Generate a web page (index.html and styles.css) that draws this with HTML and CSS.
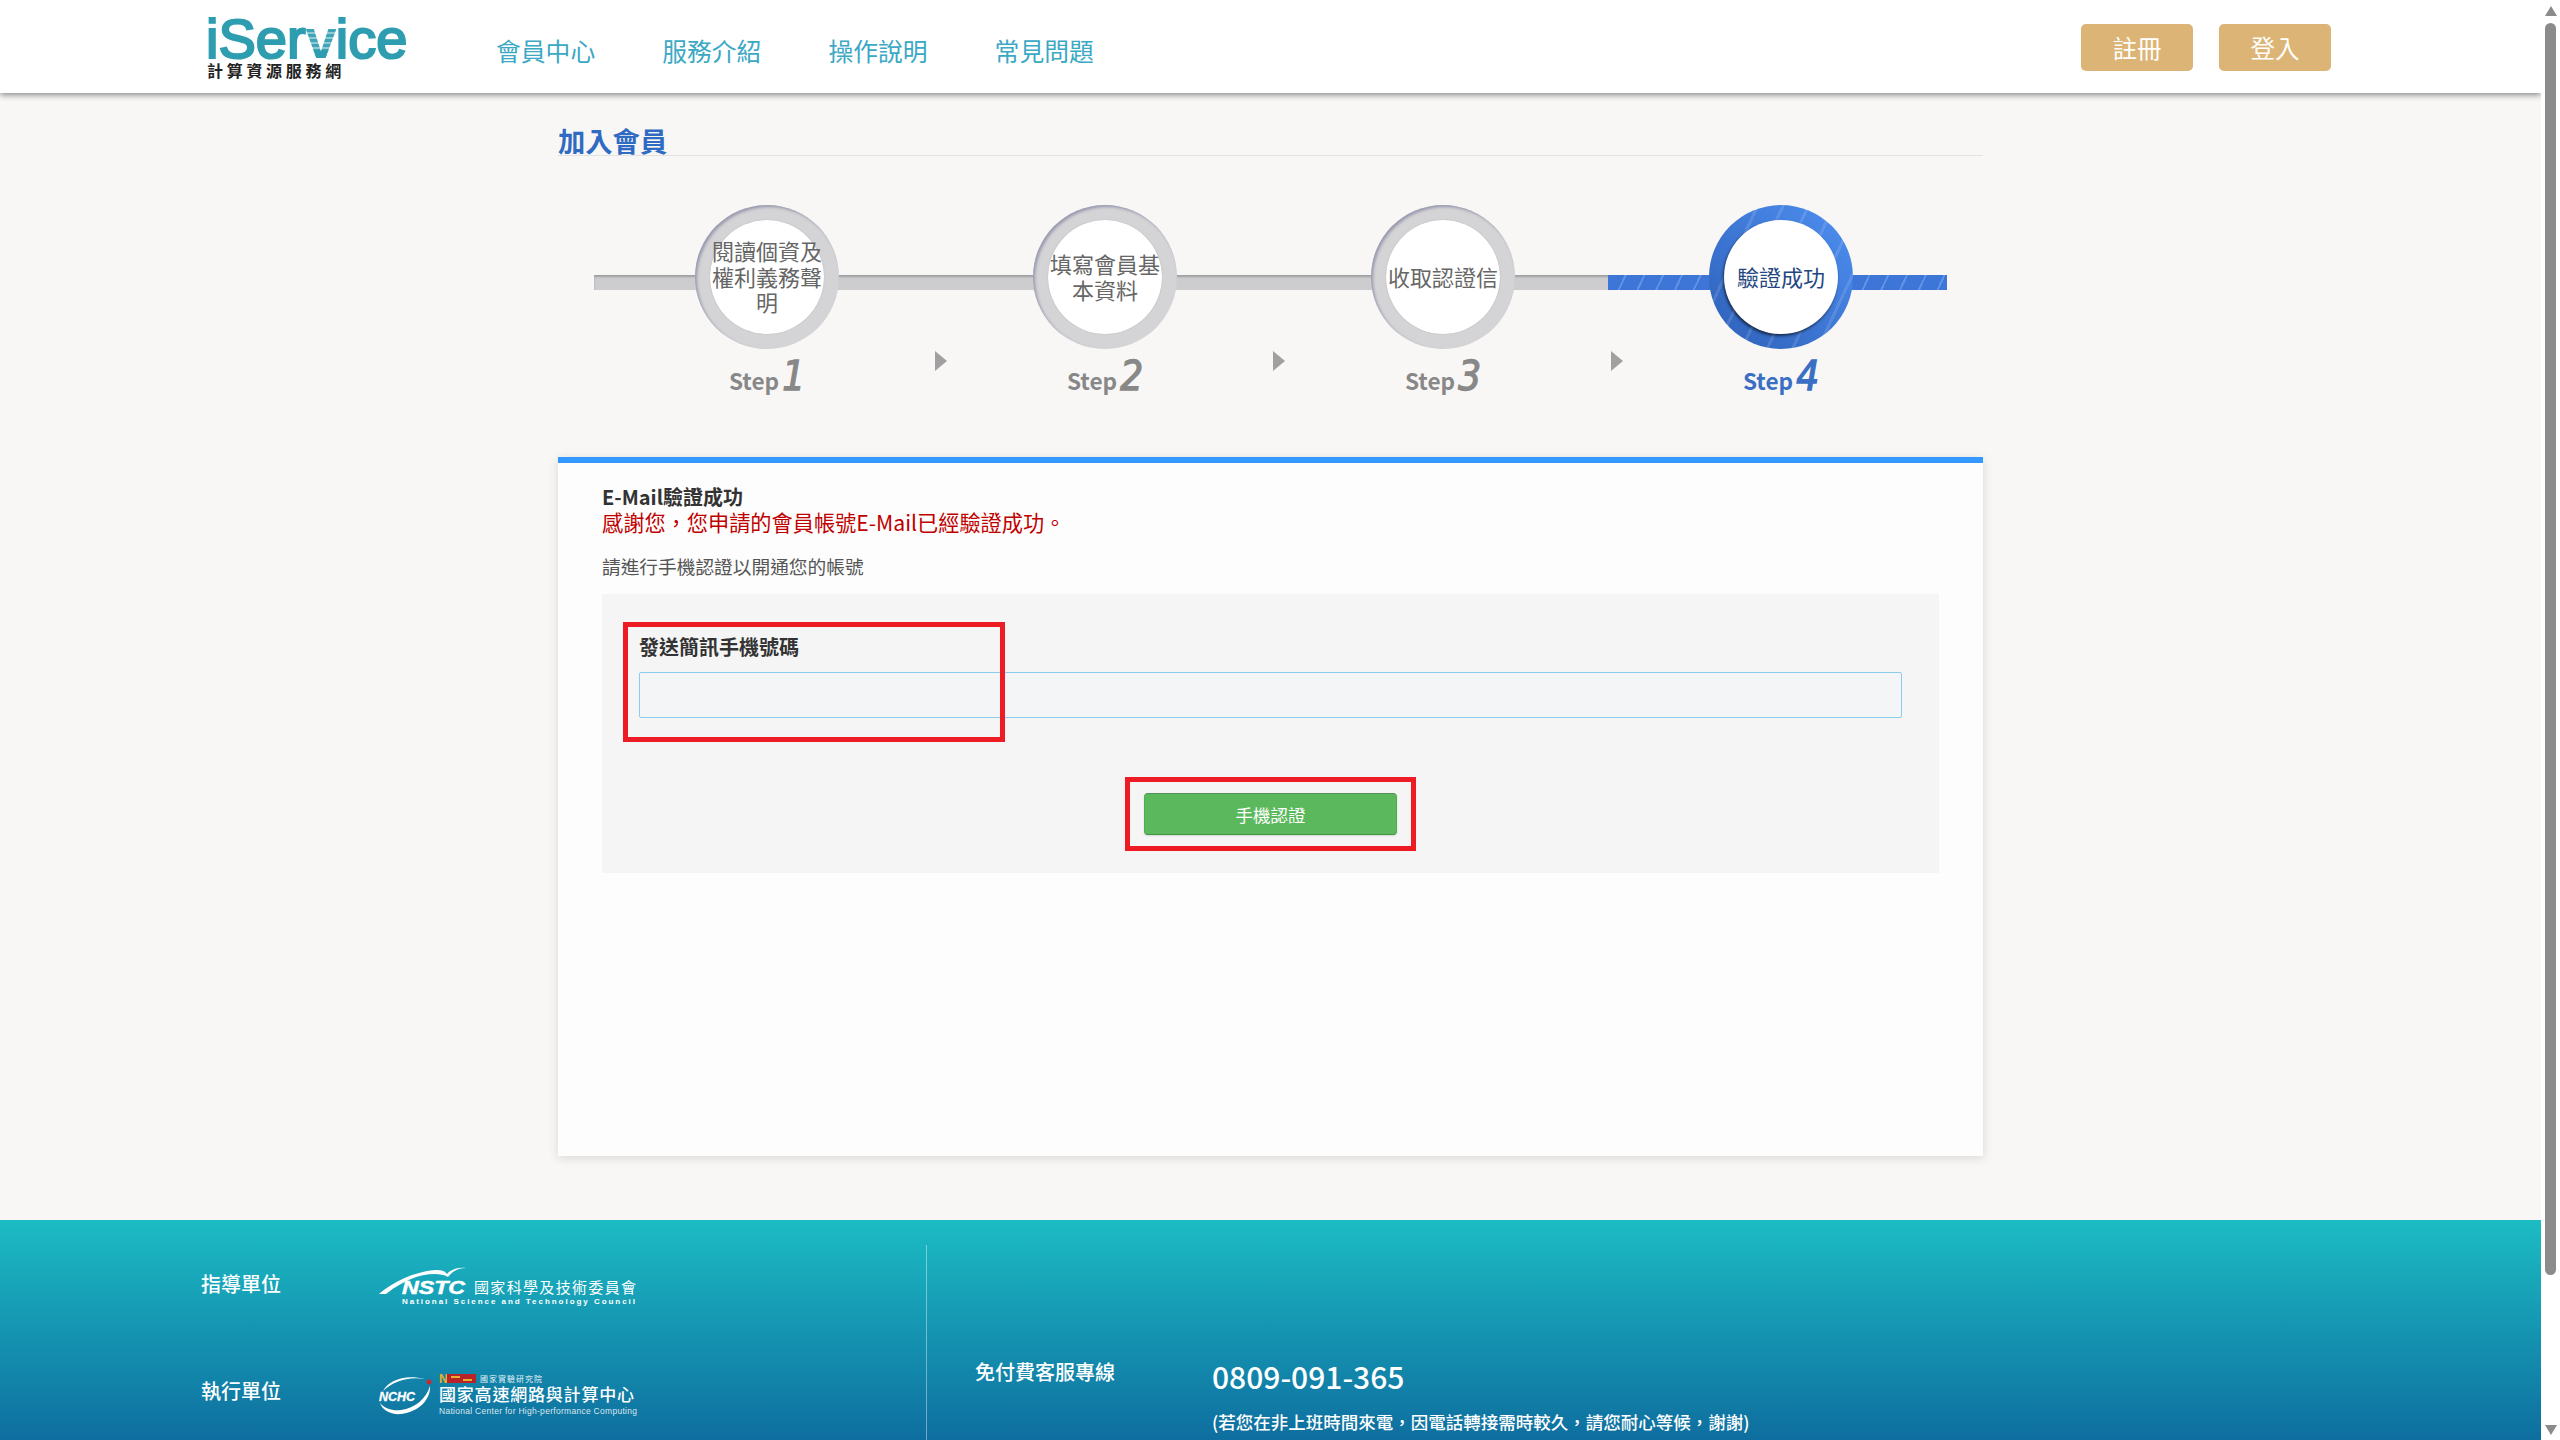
FILE: index.html
```html
<!DOCTYPE html>
<html lang="zh-Hant">
<head>
<meta charset="utf-8">
<title>加入會員 - iService</title>
<link rel="stylesheet" href="styles.css">
</head>
<body>
<div class="page">
  <header class="site-header">
    <div class="logo">
      <div class="logo-main">iSer<span class="logo-v">v</span>ice</div>
      <div class="logo-sub">計算資源服務網</div>
    </div>
    <nav class="main-nav">
      <a href="#">會員中心</a>
      <a href="#">服務介紹</a>
      <a href="#">操作說明</a>
      <a href="#">常見問題</a>
    </nav>
    <div class="auth-buttons">
      <a class="auth-btn" href="#">註冊</a>
      <a class="auth-btn" href="#">登入</a>
    </div>
  </header>

  <main class="container">
    <h1 class="page-title">加入會員</h1>

    <ol class="steps">
      <li class="step">
        <div class="ring"><div class="disc">閱讀個資及權利義務聲明</div></div>
        <div class="step-label">Step<b class="step-num">1</b></div>
      </li>
      <li class="step">
        <span class="arrow"></span>
        <div class="ring"><div class="disc">填寫會員基本資料</div></div>
        <div class="step-label">Step<b class="step-num">2</b></div>
      </li>
      <li class="step">
        <span class="arrow"></span>
        <div class="ring"><div class="disc">收取認證信</div></div>
        <div class="step-label">Step<b class="step-num">3</b></div>
      </li>
      <li class="step is-active">
        <span class="arrow"></span>
        <div class="ring"><div class="disc">驗證成功</div></div>
        <div class="step-label">Step<b class="step-num">4</b></div>
      </li>
    </ol>

    <section class="card">
      <p class="msg-title">E-Mail驗證成功</p>
      <p class="msg-red">感謝您，您申請的會員帳號E-Mail已經驗證成功。</p>
      <p class="msg-note">請進行手機認證以開通您的帳號</p>
      <form class="panel">
        <label class="field-label" for="phone">發送簡訊手機號碼</label>
        <input class="field-input" id="phone" type="text">
        <div class="actions"><button class="verify-btn" type="button">手機認證</button></div>
        <span class="mark mark-field"></span>
        <span class="mark mark-btn"></span>
      </form>
    </section>
  </main>

  <footer class="site-footer">
    <div class="units">
      <div class="unit">
        <span class="unit-label">指導單位</span>
        <svg class="org-logo" viewBox="0 0 257 39" width="257" height="39" aria-label="NSTC">
          <path class="org-fill" d="M0 28C14 16 34 6 56 4C62 3.5 66 5 68 8C72 3 80 1 87 2C79 2 74 5 69 11C60 6 45 8 32 13C20 18 12 24 7 28Z"/>
          <text class="nstc-mark" x="23" y="28" textLength="63" lengthAdjust="spacingAndGlyphs">NSTC</text>
          <text class="nstc-cjk" x="95" y="27" textLength="162">國家科學及技術委員會</text>
          <text class="nstc-en" x="23" y="38" textLength="233">National Science and Technology Council</text>
        </svg>
      </div>
      <div class="unit unit-b">
        <span class="unit-label">執行單位</span>
        <svg class="org-logo" viewBox="0 0 258 42" width="258" height="42" aria-label="NCHC">
          <path class="org-fill" d="M4 18C10 7 26 1 46 6C30 3 14 8 4 18Z"/>
          <path class="org-fill" d="M51 13C52 26 40 39 22 41C12 42 3 37 1 30C6 36 14 38 22 37C36 35 47 26 51 13Z"/>
          <circle class="org-dot" cx="50" cy="9" r="2.4"/>
          <text class="nchc-mark" x="0" y="28" textLength="36" lengthAdjust="spacingAndGlyphs">NCHC</text>
          <text class="nchc-n" x="60" y="10">N</text>
          <rect class="org-red" x="68" y="1" width="29" height="9"/>
          <rect class="org-goldbar" x="72" y="3" width="9" height="2"/>
          <rect class="org-goldbar" x="84" y="6" width="9" height="2"/>
          <text class="nchc-top" x="101" y="8.5" textLength="62">國家實驗研究院</text>
          <text class="nchc-cjk" x="60" y="28" textLength="195">國家高速網路與計算中心</text>
          <text class="nchc-en" x="60" y="41" textLength="198">National Center for High-performance Computing</text>
        </svg>
      </div>
    </div>
    <div class="hotline">
      <div class="hotline-label">免付費客服專線</div>
      <div class="hotline-info">
        <div class="hotline-number">0809-091-365</div>
        <div class="hotline-note">(若您在非上班時間來電，因電話轉接需時較久，請您耐心等候，謝謝)</div>
      </div>
    </div>
  </footer>
</div>

<div class="scrollbar">
  <span class="sb-up"></span>
  <span class="sb-thumb"></span>
  <span class="sb-down"></span>
</div>
</body>
</html>
```

FILE: styles.css
```css
* { box-sizing: border-box; }
html, body { margin: 0; padding: 0; height: 1440px; overflow: hidden; }
body {
  display: flex;
  font-family: "Noto Sans CJK TC", "Noto Sans", sans-serif;
  background: #f8f7f6;
  color: #333;
}
.page { flex: 1; min-width: 0; height: 1440px; overflow: hidden; display: flex; flex-direction: column; }

/* scrollbar */
.scrollbar {
  width: 19px; flex: none; height: 1440px; background: #fff;
  display: flex; flex-direction: column; align-items: center; padding: 6px 0 5px;
}
.sb-up { width: 0; height: 0; border: 6.5px solid transparent; border-top: 0; border-bottom: 10px solid #8b8b8b; }
.sb-thumb { width: 11px; height: 1252px; margin-top: 7px; background: #8b8b8b; border-radius: 6px; }
.sb-down { width: 0; height: 0; margin-top: auto; border: 6.5px solid transparent; border-bottom: 0; border-top: 10px solid #8b8b8b; }

/* header */
.site-header {
  height: 93px; flex: none; background: #fff; display: flex; align-items: center;
  padding: 0 210px 0 206px; box-shadow: 0 2px 6px rgba(0, 0, 0, .45); position: relative;
}
.logo { flex: none; width: 202px; height: 66px; display: flex; flex-direction: column; }
.logo-main {
  font-family: "Liberation Sans", sans-serif; font-size: 56px; line-height: 48px; height: 47px;
  color: #2e9db0; -webkit-text-stroke: 2.2px #2e9db0; white-space: nowrap; padding-top: 1px;
}
.logo-v {
  font-weight: 700; letter-spacing: -1px;
  color: transparent; -webkit-text-stroke: 0;
  background: linear-gradient(180deg, transparent 68%, #2e9db0 68%), repeating-linear-gradient(180deg, #8fcbd6 0 2px, #3fa5b6 2px 5px);
  -webkit-background-clip: text; background-clip: text;
}
.logo-sub {
  font-weight: 700; font-size: 16px; line-height: 18px; letter-spacing: 3.7px;
  color: #222; white-space: nowrap; padding-left: 1px;
}
.main-nav { display: flex; gap: 67px; margin-left: 88px; margin-top: 7px; }
.main-nav a { color: #3ba8c4; font-size: 24.8px; line-height: 34px; text-decoration: none; white-space: nowrap; }
.auth-buttons { display: flex; gap: 26px; margin-left: auto; margin-top: 2px; }
.auth-btn {
  width: 112px; height: 47px; background: #dcb576; color: #fff; border-radius: 5px;
  font-size: 24.5px; line-height: 47px; text-align: center; text-decoration: none;
}

/* container */
.container { width: 1425px; margin: 0 auto; flex: none; }
.page-title {
  margin: 33px 0 0; font-size: 27.3px; line-height: 29px; height: 30px; font-weight: 700;
  color: #2f6bc2; border-bottom: 1px solid #e2e2e2;
}

/* steps */
.steps { position: relative; list-style: none; margin: 49px 0 0; padding: 0 37px 0 36px; display: flex; height: 252px; }
.steps::before {
  content: ""; position: absolute; left: 36px; right: 36px; top: 70px; height: 15px;
  background: #cdcdd0; box-shadow: inset 0 2px 2px rgba(0, 0, 0, .22);
}
.step { flex: 1; position: relative; padding-left: 8px; display: flex; flex-direction: column; align-items: center; }
.step.is-active::before {
  content: ""; position: absolute; left: 0; right: -1px; top: 70px; height: 15px;
  background: repeating-linear-gradient(115deg, #3d76d6 0 15px, #5f92e6 15px 17px);
}
.arrow {
  position: absolute; left: 3px; top: 146px; width: 0; height: 0;
  border-left: 12px solid #a0a0a0; border-top: 10px solid transparent; border-bottom: 10px solid transparent;
}
.ring {
  position: relative; width: 144px; height: 144px; border-radius: 50%; padding: 15px;
  background: #d4d4d6; box-shadow: inset 2px 2px 3px #9a9ab0;
}
.disc {
  width: 114px; height: 114px; border-radius: 50%; background: #fff; padding-bottom: 1px;
  display: flex; align-items: center; justify-content: center; text-align: center;
  font-size: 22px; line-height: 25.5px; color: #666; box-shadow: 0 0 1px #999;
}
.is-active .ring {
  background: repeating-linear-gradient(115deg, transparent 0 20px, rgba(255, 255, 255, .12) 20px 23px), linear-gradient(45deg, #2d60b8, #4f90f2);
  box-shadow: none;
}
.is-active .disc { color: #25477f; box-shadow: -1px 2px 3px rgba(0, 0, 0, .6); }
.step-label {
  display: flex; align-items: baseline; gap: 3px; height: 54px;
  font-size: 22.6px; line-height: 54px; font-weight: 700; color: #888;
}
.step-num {
  font-family: "DejaVu Sans Condensed", "DejaVu Sans", sans-serif; font-style: italic; font-weight: 400;
  font-size: 40px; -webkit-text-stroke: 1.3px currentColor;
}
.is-active .step-label { color: #3a6fc4; }

/* card */
.card {
  height: 699px; background: #fdfdfd; border-top: 6px solid #3399ff;
  padding: 21px 44px 0; box-shadow: 0 2px 10px rgba(0, 0, 0, .13); margin-bottom: 64px;
}
.card p { margin: 0; }
.msg-title { font-size: 20px; line-height: 25px; font-weight: 700; color: #333; }
.msg-red { font-size: 21.2px; line-height: 26px; color: #c00000; }
.msg-note { font-size: 18.7px; line-height: 26px; margin-top: 18px !important; color: #555; }

/* panel */
.panel { position: relative; height: 279px; margin-top: 15px; background: #f5f5f5; padding: 39px 37px 0; }
.field-label { display: block; font-size: 20px; line-height: 28px; font-weight: 700; color: #333; }
.field-input {
  display: block; width: 100%; height: 46px; margin-top: 11px; padding: 0 12px;
  background: #f4f5f7; border: 1px solid #8accee; border-radius: 2px; outline: none;
}
.actions { display: flex; justify-content: center; margin-top: 75px; }
.verify-btn {
  width: 253px; height: 42px; padding: 1px 0 0; background: #5cb85c; color: #fff;
  border: 1px solid #4cae4c; border-top-color: #56905a; border-bottom-color: #3f9440; border-radius: 4px;
  font-family: inherit; font-size: 17.5px; line-height: 39px; box-shadow: 0 1px 2px rgba(0, 0, 0, .12);
}
.mark { position: absolute; border: 5px solid #ed1c24; pointer-events: none; }
.mark-field { left: 21px; top: 28px; width: 382px; height: 120px; }
.mark-btn { left: 523px; top: 183px; width: 291px; height: 74px; }

/* footer */
.site-footer {
  height: 220px; flex: none; display: flex; overflow: hidden; padding: 25px 0 0 201px; color: #fff;
  background: linear-gradient(180deg, #1cbcc4 0%, #0e6e9f 100%);
}
.units { width: 725px; flex: none; padding-top: 21px; display: flex; flex-direction: column; gap: 68px; }
.unit { display: flex; align-items: center; }
.unit-label { width: 178px; flex: none; font-size: 20px; line-height: 28px; font-weight: 500; position: relative; top: -2px; }
.unit-b .unit-label { top: -3px; }
.org-logo { flex: none; overflow: visible; }
.org-fill { fill: #fff; }
.org-dot { fill: #d8232a; }
.org-red { fill: #b8232a; }
.org-goldbar { fill: #e5b02c; }
.nstc-mark { font-family: "Liberation Sans", sans-serif; font-weight: 700; font-style: italic; font-size: 19px; fill: #fff; stroke: #fff; stroke-width: .5px; }
.nstc-cjk { font-size: 15px; fill: #fff; }
.nstc-en { font-family: "Liberation Sans", sans-serif; font-weight: 700; font-size: 8px; fill: #fff; }
.nchc-mark { font-family: "Liberation Sans", sans-serif; font-weight: 700; font-style: italic; font-size: 12px; fill: #fff; stroke: #fff; stroke-width: .3px; }
.nchc-n { font-family: "Liberation Sans", sans-serif; font-weight: 700; font-size: 12px; fill: #e5b02c; }
.nchc-top { font-size: 8px; fill: rgba(255, 255, 255, .9); }
.nchc-cjk { font-size: 17px; font-weight: 500; fill: #fff; }
.nchc-en { font-family: "Liberation Sans", sans-serif; font-size: 8.5px; fill: rgba(255, 255, 255, .85); }
.hotline {
  flex: 1; display: flex; border-left: 1px solid rgba(255, 255, 255, .4); padding: 0 0 0 48px;
}
.hotline-label { width: 237px; flex: none; padding-top: 113px; font-size: 20px; line-height: 28px; font-weight: 500; }
.hotline-info { padding-top: 111px; white-space: nowrap; }
.hotline-number { font-size: 30px; line-height: 40px; font-weight: 500; }
.hotline-note { margin-top: 13px; font-size: 17.5px; line-height: 26px; font-weight: 500; }
```
